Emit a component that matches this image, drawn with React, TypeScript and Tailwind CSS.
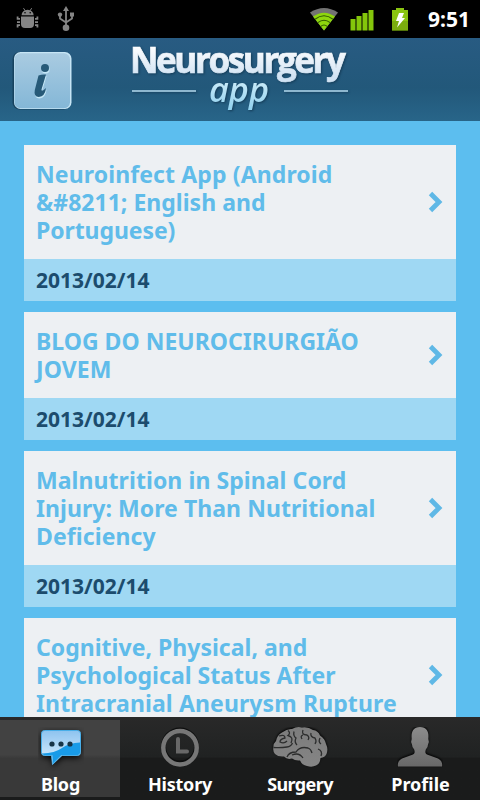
import type { ReactNode } from "react";

type Post = {
  lines: { text: string; className: string }[];
  date: string;
};

const POSTS: Post[] = [
  {
    lines: [
      { text: "Neuroinfect App (Android", className: "tracking-[0.12px]" },
      { text: "&#8211; English and", className: "tracking-[0.02px]" },
      { text: "Portuguese)", className: "tracking-[-0.08px]" },
    ],
    date: "2013/02/14",
  },
  {
    lines: [
      { text: "BLOG DO NEUROCIRURGIÃO", className: "tracking-[0.02px]" },
      { text: "JOVEM", className: "tracking-[0.1px]" },
    ],
    date: "2013/02/14",
  },
  {
    lines: [
      { text: "Malnutrition in Spinal Cord", className: "tracking-[0.07px]" },
      { text: "Injury: More Than Nutritional", className: "tracking-[0.06px]" },
      { text: "Deficiency", className: "tracking-[0.1px]" },
    ],
    date: "2013/02/14",
  },
  {
    lines: [
      { text: "Cognitive, Physical, and", className: "tracking-[0.02px]" },
      { text: "Psychological Status After", className: "tracking-[0.02px]" },
      { text: "Intracranial Aneurysm Rupture", className: "tracking-[0.12px]" },
    ],
    date: "2013/02/14",
  },
];

function StatusBar() {
  return (
    <div className="flex h-[38px] shrink-0 items-center bg-black pr-[10px] pl-4">
      <svg width="24" height="24" viewBox="0 0 24 24" fill="#858585">
        <path d="M6 8.500a6 5.600 0 0 1 12 0z" transform="translate(-.4 -.2)" />
        <path d="M7.500 1.200l2 3M15.700 1.200l-2 3" stroke="#858585" strokeWidth="1" />
        <circle cx="9" cy="5.800" r=".8" fill="#000" />
        <circle cx="14.200" cy="5.800" r=".8" fill="#000" />
        <path d="M5 9.400h13v7.600q0 4-4 4h-5q-4 0-4-4z" />
        <path
          d="M4 11.800H1.600V9.600M4 15.200H1M4 18.200H1.600V20.400M19 11.800h2.400V9.600M19 15.200h3M19 18.200h2.400V20.400"
          fill="none"
          stroke="#858585"
          strokeWidth="1.800"
        />
      </svg>
      <svg className="ml-[17px]" width="18" height="26" viewBox="0 0 18 26" fill="#858585">
        <path d="M9 0l3 5H6z" />
        <path d="M9 4v18M3 9.500v3l6 4M15 9.500v3l-6 4" fill="none" stroke="#858585" strokeWidth="1.800" />
        <circle cx="3" cy="8.600" r="2.200" />
        <path d="M13 6.500h4v4h-4z" />
        <circle cx="9" cy="21.800" r="3.300" />
      </svg>

      <div className="ml-auto flex items-center">
        <svg width="30" height="24" viewBox="0 0 30 24">
          <path d="M15 23.500L1 5.600Q15-3.600 29 5.600z" fill="#737373" />
          <path d="M15 23.500L4 9.500Q15 1.800 26 9.500z" fill="#8ed60d" />
          <path
            d="M6 12.200Q15 5.400 24 12.200M8.800 15.600Q15 10.800 21.200 15.600M11.800 19.300Q15 16.600 18.200 19.300"
            fill="none"
            stroke="#315900"
            strokeWidth="1.100"
          />
        </svg>
        <svg className="ml-[11px]" width="24" height="24" viewBox="0 0 24 24" fill="#84c60b">
          <path d="M.5 12h5v11.500h-5zM6.500 9h5v14.500h-5zM12.500 6h5v17.500h-5zM18.500 3h5v20.500h-5z" />
        </svg>
        <svg className="ml-[17px]" width="18" height="24" viewBox="0 0 18 24">
          <path d="M1 3h4V1h8v2h4v20.500H1z" fill="#8ac411" />
          <path d="M1 14h16v9.500H1z" fill="#719f0e" opacity=".6" />
          <path d="M8 6h5l-2 5h3L6 20.500l2-6.500H5z" fill="#fff" />
        </svg>
        <span className="ml-[19px] w-[42px] text-[21px] leading-[38px] font-bold whitespace-nowrap text-white">
          9:51
        </span>
      </div>
    </div>
  );
}

function Header() {
  return (
    <header className="flex h-[83px] shrink-0 bg-linear-to-b from-[#285b82] via-[#22587a] via-60% to-[#286589]">
      <svg width="120" height="83" viewBox="0 0 120 83">
        <defs>
          <linearGradient id="info-face" x1="0" y1="0" x2="0" y2="1">
            <stop offset="0" stopColor="#a9cbe1" />
            <stop offset="1" stopColor="#84b7d7" />
          </linearGradient>
        </defs>
        <rect x="12.500" y="14" width="58" height="57.500" rx="7" fill="#17425f" />
        <rect x="14" y="14" width="57.500" height="57" rx="6.500" fill="#c6e5f5" />
        <rect x="14.500" y="15.200" width="55.500" height="55" rx="6" fill="url(#info-face)" />
        <g fill="#c5e7f7" transform="translate(.6 1.600)">
          <circle cx="45" cy="30" r="4" />
          <path d="M38.500 37.500Q42 36 46 36.500L41.500 51.500Q41.500 54.500 46 50Q45 58.500 38.800 59Q33.500 58.500 34.800 52z" />
        </g>
        <g fill="#275a78">
          <circle cx="45" cy="30" r="4" />
          <path d="M38.500 37.500Q42 36 46 36.500L41.500 51.500Q41.500 54.500 46 50Q45 58.500 38.800 59Q33.500 58.500 34.800 52z" />
        </g>
      </svg>
      <svg width="240" height="83" viewBox="120 38 240 83">
        <defs>
          <linearGradient id="logo-title" x1="0" y1="0" x2="0" y2="1">
            <stop offset="0.200" stopColor="#ffffff" />
            <stop offset="0.900" stopColor="#d0e2f3" />
          </linearGradient>
          <linearGradient id="logo-app" x1="0" y1="0" x2="0" y2="1">
            <stop offset="0.200" stopColor="#d8f1fb" />
            <stop offset="1" stopColor="#8ccfee" />
          </linearGradient>
        </defs>
        <g className="drop-shadow-[1px_1px_1px_#143c58]">
          <text
            x="130"
            y="72.500"
            textLength="216"
            lengthAdjust="spacing"
            fontSize="35"
            fontWeight="700"
            fontFamily="Open Sans, sans-serif"
            fill="url(#logo-title)"
            stroke="url(#logo-title)"
            strokeWidth=".7"
          >
            Neurosurgery
          </text>
          <text
            x="209"
            y="101.500"
            textLength="60"
            lengthAdjust="spacingAndGlyphs"
            fontSize="35"
            fontStyle="italic"
            fontWeight="600"
            fontFamily="Open Sans, sans-serif"
            fill="url(#logo-app)"
          >
            app
          </text>
          <path d="M132 91h64M284 91h64" stroke="#b5dcf0" strokeWidth="1.600" />
        </g>
      </svg>
    </header>
  );
}

function PostCard({ post }: { post: Post }) {
  return (
    <article className="shrink-0">
      <div className="flex items-center justify-between bg-[#edf0f3] py-[15px] pr-[13px] pl-3">
        <h2 className="text-[23px] leading-7 font-bold whitespace-nowrap text-[#60bcea]">
          {post.lines.map((line) => (
            <span key={line.text} className={`block w-fit ${line.className}`}>
              {line.text}
            </span>
          ))}
        </h2>
        <svg className="shrink-0" width="15" height="22" viewBox="0 0 15 22">
          <path d="M2.500 2.500L11 11L2.500 19.500" fill="none" stroke="#5fb8e6" strokeWidth="4.800" />
        </svg>
      </div>
      <p className="h-[42px] bg-[#9fd8f3] pl-3 text-[21px] leading-[43px] font-bold text-[#1c4c6d]">
        {post.date}
      </p>
    </article>
  );
}

function BlogIcon() {
  return (
    <svg width="46" height="44" viewBox="0 0 46 44" className="ml-[2px]">
      <defs>
        <linearGradient id="bubble" x1="0" y1="0" x2="0" y2="1">
          <stop offset="0" stopColor="#8dc3ef" />
          <stop offset="1" stopColor="#e0f3ff" />
        </linearGradient>
      </defs>
      <path
        d="M6.500 3.500h33q3 0 3 3v19q0 3-3 3H24L14.500 37.500l-1-9h-7q-3 0-3-3V6.500q0-3 3-3z"
        fill="url(#bubble)"
        className="drop-shadow-[0_2px_3px_#000]"
      />
      <path
        d="M4 26.500Q17 26 24 21Q31 16 42 15.500V25.500q0 2.500-2.500 2.500H23.500L15 36.500l-.8-8.500H6.500Q4 28 4 26.500z"
        fill="#199be8"
      />
      <path
        d="M6.500 3.500h33q3 0 3 3v19q0 3-3 3H24L14.500 37.500l-1-9h-7q-3 0-3-3V6.500q0-3 3-3z"
        fill="none"
        stroke="#48aee8"
        strokeWidth="1"
      />
      <g fill="#173447">
        <circle cx="14" cy="17" r="2.600" />
        <circle cx="23" cy="17" r="2.600" />
        <circle cx="32" cy="17" r="2.600" />
      </g>
    </svg>
  );
}

function HistoryIcon() {
  return (
    <svg width="44" height="44" viewBox="0 0 44 44">
      <circle cx="22" cy="19.500" r="16.500" fill="none" stroke="#0d0e0e" strokeWidth="5" />
      <circle cx="22" cy="20.700" r="16.700" fill="none" stroke="#777777" strokeWidth="4.500" />
      <path d="M20 12v12.500h9" fill="none" stroke="#686868" strokeWidth="4" strokeLinecap="round" />
    </svg>
  );
}

function BrainIcon() {
  return (
    <svg width="60" height="44" viewBox="0 0 60 44">
      <defs>
        <linearGradient id="brain" x1="0" y1="0" x2="0" y2="1">
          <stop offset="0" stopColor="#7c7c7c" />
          <stop offset="1" stopColor="#858585" />
        </linearGradient>
      </defs>
      <path
        d="M3.500 20Q3 17 6 14Q7 8 12 5.500Q17 1.500 22 2Q27-1 32 .5Q38-.5 43 3Q48 3.500 50 8.500Q55 11.500 56 17Q58.500 22 56.500 27Q55 30.500 50.500 31Q50 37 46 38.500Q42 40.500 37 39Q32 38 30 33.500Q25 34 22 31.500Q17 33 14 29.500Q8 30 5 27Q2.500 24 3.500 20z"
        fill="url(#brain)"
        className="drop-shadow-[0_-1px_1px_#000]"
      />
      <path
        d="M3.500 20.500Q11 21 17 20Q21 19.500 22.500 16M17 30Q19 25 26 25Q30 19 38 21Q41 22 42 26M22 28Q29 25 33 31M9 9Q15 7 15 11Q10 12 10 15Q14 17 17 14M18 3.500Q21 6 18 8.500Q24 10 21 16M24 4.500Q23 9 26 11Q24 15 27 18M33 3Q31 8 37 8Q40 10 38 13M41 6Q40 10 45 11Q47 14 45 17M32 12Q30 9 33 8M50 11Q48 15 51 17M48 22Q53 24 51 29"
        fill="none"
        stroke="#2c2d2d"
        strokeWidth="1.300"
      />
    </svg>
  );
}

function ProfileIcon() {
  return (
    <svg width="46" height="44" viewBox="0 0 46 44">
      <defs>
        <linearGradient id="person" x1="0" y1="0" x2="0" y2="1">
          <stop offset="0" stopColor="#8c8c8c" />
          <stop offset="1" stopColor="#686868" />
        </linearGradient>
      </defs>
      <path
        d="M1 39.500Q0 34 5 31.500L16 27.500Q18.500 26.500 17.200 22.500Q15 20.500 15 17.500Q13.500 14.500 14.700 12Q13.500 0 23 0Q32.500 0 31.300 12Q32.500 14.500 31 17.500Q31 20.500 28.800 22.500Q27.500 26.500 30 27.500L41 31.500Q46 34 45 39.500z"
        fill="url(#person)"
        className="drop-shadow-[0_-1px_1px_#000]"
      />
    </svg>
  );
}

type TabProps = {
  label: string;
  active?: boolean;
  labelClass?: string;
  children: ReactNode;
};

function Tab({ label, active, labelClass = "", children }: TabProps) {
  return (
    <div
      className={`flex h-[77px] w-[120px] flex-col items-center ${
        active ? "bg-linear-to-b from-[#424242] from-45% to-[#393939] to-50%" : ""
      }`}
    >
      <div className="mt-[7px] h-[44px]">{children}</div>
      <span className={`text-[18px] leading-[26px] font-bold whitespace-nowrap text-white ${labelClass}`}>
        {label}
      </span>
    </div>
  );
}

export default function App() {
  return (
    <div className="flex h-[800px] w-[480px] flex-col overflow-hidden bg-[#5cbeef] font-['Noto_Sans','Open_Sans',sans-serif]">
      <StatusBar />
      <Header />
      <main className="flex min-h-0 flex-1 flex-col gap-[11px] overflow-hidden px-6 pt-6">
        {POSTS.map((post) => (
          <PostCard key={post.lines[0].text} post={post} />
        ))}
      </main>
      <nav className="flex h-[83px] shrink-0 bg-linear-to-b from-[#292929] via-[#202222] via-48% to-[#1a1b1b] to-50% pt-[3px]">
        <Tab label="Blog" active labelClass="pl-px tracking-[-0.2px]">
          <BlogIcon />
        </Tab>
        <Tab label="History" labelClass="tracking-[-0.2px]">
          <HistoryIcon />
        </Tab>
        <Tab label="Surgery" labelClass="tracking-[-0.6px]">
          <BrainIcon />
        </Tab>
        <Tab label="Profile" labelClass="pl-px">
          <ProfileIcon />
        </Tab>
      </nav>
    </div>
  );
}
